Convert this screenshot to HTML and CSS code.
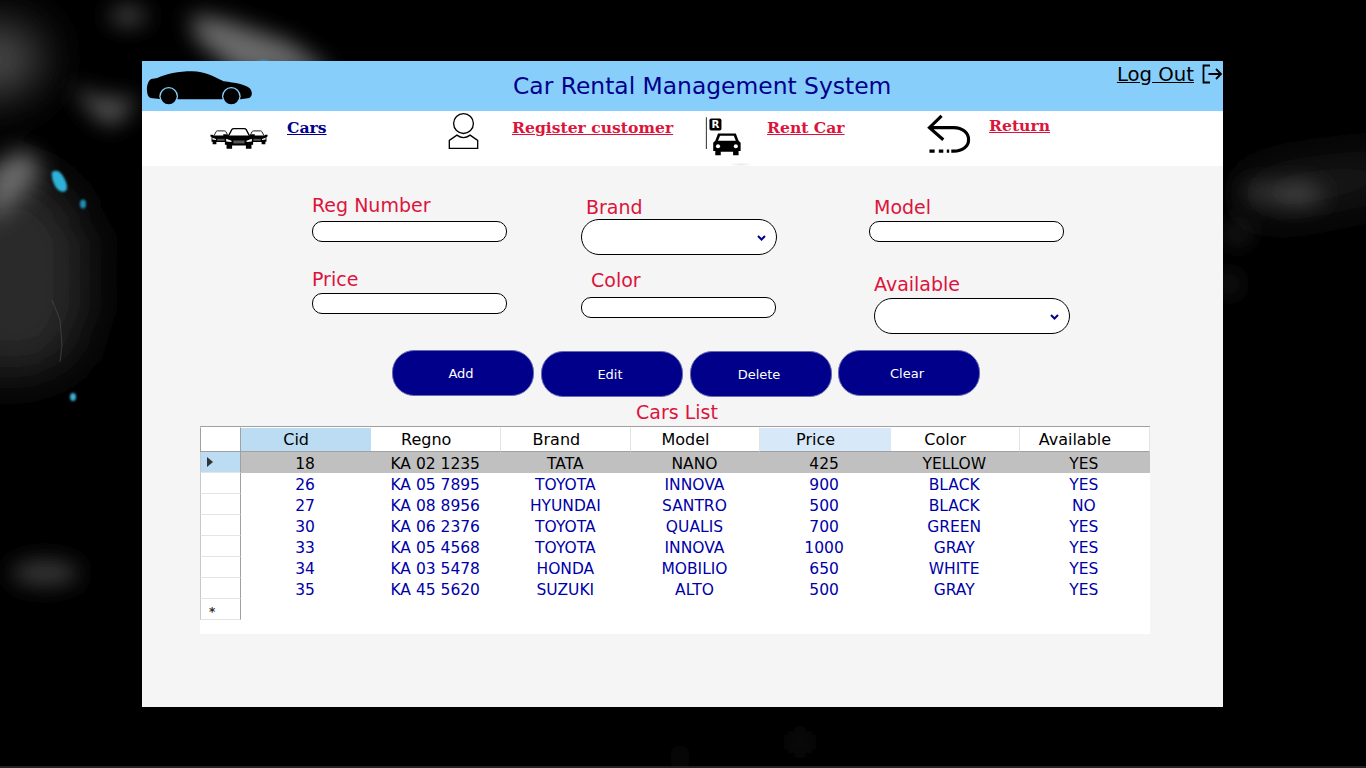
FILE: index.html
```html
<!DOCTYPE html>
<html lang="en">
<head>
  <meta charset="UTF-8" />
  <meta name="viewport" content="width=device-width, initial-scale=1.0" />
  <title>Car Rental Management System</title>
  <link rel="stylesheet" href="styles.css">
</head>
<body>
  <!-- dark wallpaper, painted by hand -->
  <svg class="wallpaper" viewBox="0 0 1366 768" width="1366" height="768">
    <defs>
      <filter id="blurBig" x="-100%" y="-100%" width="300%" height="300%"><feGaussianBlur stdDeviation="24"/></filter>
      <filter id="blurMid" x="-100%" y="-100%" width="300%" height="300%"><feGaussianBlur stdDeviation="11"/></filter>
      <filter id="blurSmall" x="-50%" y="-50%" width="200%" height="200%"><feGaussianBlur stdDeviation="1.2"/></filter>
      <symbol id="frontCar" viewBox="0 0 100 64">
        <path d="M18 24 L28 5 Q30 2 34 2 H66 Q70 2 72 5 L82 24" fill="#fff" stroke="#000" stroke-width="4"/>
        <path d="M2 19 H12 L16 23 H84 L88 19 H98 V27 L93 30 V51 H88 V63 H71 V53 H29 V63 H12 V51 H7 V30 L2 27 Z" fill="#000"/>
        <path d="M11 33 L27 39 V43 L11 41 Z M89 33 L73 39 V43 L89 41 Z" fill="#fff"/>
        <path d="M33 38 H67 V47 H33 Z" fill="#555"/>
      </symbol>
    </defs>
    <g filter="url(#blurBig)">
      <path d="M-40 20 L30 30 L45 60 L25 90 L-40 100 Z" fill="#505050"/>
      <path d="M-40 190 L20 170 L60 190 L85 235 L85 310 L70 360 L20 375 L-40 370 Z" fill="#2a2a2a"/>
      <path d="M1240 185 L1300 172 L1400 160 L1400 185 L1300 205 L1250 210 Z" fill="#2c2c2c"/>
    </g>
    <g filter="url(#blurMid)">
      <path d="M190 14 L225 20 L290 42 L335 75 L240 75 L197 40 Z" fill="#6a6a6a"/>
      <ellipse cx="128" cy="16" rx="18" ry="9" fill="#505050"/>
      <path d="M72 86 L105 100 L135 98 L128 112 L110 126 L92 112 Z" fill="#5e5e5e"/>
      <path d="M-10 170 L22 150 L42 165 L30 188 L-10 225 Z" fill="#6a6a6a"/>
      <ellipse cx="45" cy="573" rx="34" ry="12" fill="#3c3c3c"/>
      <ellipse cx="1296" cy="194" rx="28" ry="10" fill="#4a4a4a"/>
      <ellipse cx="1260" cy="192" rx="16" ry="8" fill="#404040"/>
      <ellipse cx="1238" cy="233" rx="9" ry="6" fill="#4c4c4c"/>
      <ellipse cx="1230" cy="284" rx="7" ry="8" fill="#383838"/>
      <ellipse cx="800" cy="742" rx="5" ry="12" fill="#262626"/>
      <ellipse cx="680" cy="758" rx="5" ry="7" fill="#2a2a2a"/>
    </g>
    <g filter="url(#blurSmall)">
      <path d="M52 172 Q58 168 63 176 Q69 186 66 191 Q60 194 55 186 Q51 178 52 172 Z" fill="#2fb0d8"/>
      <ellipse cx="83" cy="204" rx="3" ry="4.500" fill="#1f8fb4"/>
      <ellipse cx="73" cy="397" rx="3" ry="4" fill="#3ab0d4"/>
      <path d="M255 62 Q262 58 272 62 Z" fill="#3b8fc4"/>
    </g>
    <path d="M52 300 L60 320 L62 345 L60 362" fill="none" stroke="#4a4a4a" stroke-width="0.7"/>
  </svg>

  <div id="mainWindow">
    <header class="topBar">
      <svg class="logoCar" viewBox="12 30 324 108" width="108" height="36">
        <path d="M15 92 C14 78 18 62 28 57 L46 54 C72 42 110 34 150 34 C190 34 215 50 245 64 C280 68 310 74 322 84 C331 92 333 108 322 114 L296 118 H60 L25 114 C18 110 15 100 15 92 Z" fill="#000"/>
        <circle cx="80" cy="109" r="28" fill="#87cefa"/>
        <circle cx="268" cy="109" r="28" fill="#87cefa"/>
        <circle cx="80" cy="109" r="24" fill="#000"/>
        <circle cx="268" cy="109" r="24" fill="#000"/>
      </svg>
      <h1 class="title">Car Rental Management System</h1>
      <div class="logout">
        <a href="#">Log Out</a>
        <svg viewBox="0 0 22 22" width="22" height="22">
          <path d="M9 2.500 H2.500 V19.500 H9 M7.500 11 H20 M15 6 L20 11 L15 16" fill="none" stroke="#000" stroke-width="1.8"/>
        </svg>
      </div>
    </header>

    <nav class="navBar">
      <div class="navItem navCars">
        <svg class="iconCars" viewBox="0 0 58 21" width="58" height="21">
          <use href="#frontCar" x="0" y="2" width="22" height="15"/>
          <use href="#frontCar" x="36" y="2" width="22" height="15"/>
          <use href="#frontCar" x="12" y="0" width="34" height="21"/>
        </svg>
        <a class="blue" href="#">Cars</a>
      </div>
      <div class="navItem navCustomer">
        <svg viewBox="915 155 100 115" width="33" height="38">
          <circle cx="965" cy="190" r="30" fill="#fff" stroke="#000" stroke-width="4"/>
          <path d="M922 265 V241 L945 225 Q965 240 985 225 L1008 241 V265 Z" fill="#fff" stroke="#000" stroke-width="4"/>
        </svg>
        <a href="#">Register customer</a>
      </div>
      <div class="navItem navRent">
        <svg viewBox="44 162 108 116" width="37" height="40">
          <path d="M48 165 V258" stroke="#333" stroke-width="3"/>
          <rect x="57" y="169" width="35" height="35" rx="5" fill="#000"/>
          <text x="74.500" y="197" class="parkR">R</text>
          <path d="M68 240 L74 234 L82 213 H134 L142 234 L148 240 V264 H142 V276 H126 V266 H90 V276 H74 V264 H68 Z" fill="#000"/>
          <path d="M88 219 H128 L134 234 H82 Z" fill="#fff"/>
          <circle cx="82" cy="250" r="6" fill="#fff"/>
          <circle cx="134" cy="250" r="6" fill="#fff"/>
        </svg>
        <a href="#">Rent Car</a>
      </div>
      <div class="navItem navReturn">
        <svg viewBox="685 155 130 118" width="45" height="41">
          <path d="M730 163 L695 197 L735 232 M695 197 H765 C790 197 808 212 808 232 C808 252 790 265 765 265 H758" fill="none" stroke="#000" stroke-width="9"/>
          <path d="M695 265 H710 M722 265 H735 M745 265 H752" fill="none" stroke="#000" stroke-width="9"/>
        </svg>
        <a href="#">Return</a>
      </div>
    </nav>

    <main class="content">
      <form class="carForm">
        <div class="formCol colOne">
          <div class="field fieldReg">
            <label>Reg Number</label>
            <input type="text" />
          </div>
          <div class="field fieldPrice">
            <label>Price</label>
            <input type="text" />
          </div>
        </div>
        <div class="formCol colTwo">
          <div class="field fieldBrand">
            <label>Brand</label>
            <div class="selectBox">
              <select><option></option></select>
              <svg class="chevron" viewBox="0 0 9 6" width="9" height="6"><path d="M1 1 L4.500 4.500 L8 1" fill="none" stroke="#00008b" stroke-width="2"/></svg>
            </div>
          </div>
          <div class="field fieldColor">
            <label>Color</label>
            <input type="text" />
          </div>
        </div>
        <div class="formCol colThree">
          <div class="field fieldModel">
            <label>Model</label>
            <input type="text" />
          </div>
          <div class="field fieldAvailable">
            <label>Available</label>
            <div class="selectBox">
              <select><option></option></select>
              <svg class="chevron" viewBox="0 0 9 6" width="9" height="6"><path d="M1 1 L4.500 4.500 L8 1" fill="none" stroke="#00008b" stroke-width="2"/></svg>
            </div>
          </div>
        </div>
      </form>

      <div class="actions">
        <button type="button">Add</button>
        <button type="button" class="low">Edit</button>
        <button type="button" class="low">Delete</button>
        <button type="button">Clear</button>
      </div>

      <h2 class="listTitle">Cars List</h2>

      <div class="gridWrap">
        <table class="carGrid">
          <colgroup>
            <col class="cHead"><col class="cWide"><col class="cWide"><col class="cWide">
            <col class="cModel"><col class="cPrice"><col class="cColor"><col class="cWide">
          </colgroup>
          <thead>
            <tr>
              <th class="corner"></th>
              <th class="sel">Cid</th>
              <th>Regno</th>
              <th>Brand</th>
              <th>Model</th>
              <th class="soft">Price</th>
              <th>Color</th>
              <th>Available</th>
            </tr>
          </thead>
          <tbody>
            <tr class="current">
              <td class="rowHead"><span class="caret"></span></td>
              <td>18</td><td>KA 02 1235</td><td>TATA</td><td>NANO</td><td>425</td><td>YELLOW</td><td>YES</td>
            </tr>
            <tr>
              <td class="rowHead"></td>
              <td>26</td><td>KA 05 7895</td><td>TOYOTA</td><td>INNOVA</td><td>900</td><td>BLACK</td><td>YES</td>
            </tr>
            <tr>
              <td class="rowHead"></td>
              <td>27</td><td>KA 08 8956</td><td>HYUNDAI</td><td>SANTRO</td><td>500</td><td>BLACK</td><td>NO</td>
            </tr>
            <tr>
              <td class="rowHead"></td>
              <td>30</td><td>KA 06 2376</td><td>TOYOTA</td><td>QUALIS</td><td>700</td><td>GREEN</td><td>YES</td>
            </tr>
            <tr>
              <td class="rowHead"></td>
              <td>33</td><td>KA 05 4568</td><td>TOYOTA</td><td>INNOVA</td><td>1000</td><td>GRAY</td><td>YES</td>
            </tr>
            <tr>
              <td class="rowHead"></td>
              <td>34</td><td>KA 03 5478</td><td>HONDA</td><td>MOBILIO</td><td>650</td><td>WHITE</td><td>YES</td>
            </tr>
            <tr>
              <td class="rowHead"></td>
              <td>35</td><td>KA 45 5620</td><td>SUZUKI</td><td>ALTO</td><td>500</td><td>GRAY</td><td>YES</td>
            </tr>
            <tr>
              <td class="rowHead newRow">*</td>
              <td></td><td></td><td></td><td></td><td></td><td></td><td></td>
            </tr>
          </tbody>
        </table>
      </div>
    </main>
  </div>
</body>
</html>
```

FILE: styles.css
```css
html, body {
  height: 100%;
}
body {
  margin: 0;
  overflow: hidden;
  position: relative;
  font-family: "DejaVu Sans", Verdana, sans-serif;
  background-color: #000;
}
/* thin lighter strip along the bottom of the screen */
body::after {
  content: "";
  position: absolute;
  left: 0;
  right: 0;
  bottom: 0;
  height: 2px;
  background: #222;
}
.wallpaper {
  position: absolute;
  top: 0;
  left: 0;
}

#mainWindow {
  position: relative;
  width: 1081px;
  height: 646px;
  margin: 61px 0 0 142px;
  display: flex;
  flex-direction: column;
  background: #f5f5f5;
}

/* top bar */
.topBar {
  height: 50px;
  flex: none;
  background: #87cefa;
  display: grid;
  grid-template-columns: 371px auto 1fr;
  align-items: start;
}
.logoCar {
  margin: 9px 0 0 4px;
}
.title {
  margin: 10px 0 0;
  font-size: 23.4px;
  line-height: 30px;
  font-weight: normal;
  color: #00008b;
  white-space: nowrap;
}
.logout {
  justify-self: end;
  display: flex;
  align-items: flex-start;
  gap: 7px;
  padding-top: 3px;
}
.logout a {
  color: #000;
  font-size: 19.7px;
  line-height: 22px;
}
.logout svg {
  margin-top: -1px;
}

/* nav */
.navBar {
  height: 55px;
  flex: none;
  background: #fff;
  padding-left: 68px;
  display: grid;
  grid-template-columns: 239px 257px 222px 1fr;
}
.navItem {
  display: flex;
  align-items: flex-start;
}
.navItem a {
  font-family: "DejaVu Serif", serif;
  font-weight: bold;
  font-size: 15.6px;
  line-height: 20px;
  color: #dc143c;
}
.navItem a.blue {
  color: #00008b;
}
.navCars svg {
  margin: 17px 19px 0 0;
}
.navCars a {
  margin-top: 7px;
}
.navCustomer svg {
  margin: 1px 32px 0 -2px;
}
.navCustomer a {
  margin-top: 7px;
}
.navRent {
  position: relative;
}
/* faint smudge under the parking icon */
.navRent::after {
  content: "";
  position: absolute;
  left: 24px;
  top: 52px;
  width: 22px;
  height: 3px;
  background: radial-gradient(ellipse at center, #e8e8e8, #fff 80%);
}
.navRent svg {
  margin: 5px 25px 0 -1px;
}
.navRent a {
  margin-top: 7px;
}
.navReturn svg {
  margin: 2px 18px 0 -2px;
}
.navReturn a {
  margin-top: 5px;
}

/* form */
.content {
  flex: 1;
}
.carForm {
  display: grid;
  grid-template-columns: 269px 288px auto;
  padding-left: 170px;
}
.formCol {
  display: flex;
  flex-direction: column;
}
.field label {
  display: block;
  height: 24px;
  line-height: 24px;
  font-size: 19px;
  color: #dc143c;
}
.field input {
  display: block;
  box-sizing: border-box;
  width: 195px;
  height: 21px;
  margin: 4px 0 0;
  padding: 0 8px;
  background: #fff;
  border: 1px solid #000;
  border-radius: 10px;
  outline: none;
}
.selectBox {
  position: relative;
  width: 196px;
}
.field select {
  display: block;
  box-sizing: border-box;
  width: 196px;
  height: 36px;
  margin: 0;
  padding: 0 8px;
  appearance: none;
  background-color: #fff;
  color: #00008b;
  border: 1px solid #000;
  border-radius: 18px;
  font-size: 14px;
}
.chevron {
  position: absolute;
  right: 11px;
  top: 16px;
}
.fieldReg {
  margin-top: 27px;
}
.fieldPrice {
  margin-top: 25px;
}
.fieldPrice input {
  margin-top: 2px;
}
.fieldBrand {
  margin-top: 29px;
}
.fieldBrand label {
  padding-left: 5px;
}
.fieldColor {
  margin-top: 13px;
}
.fieldColor label {
  padding-left: 10px;
}
.fieldColor input {
  margin-top: 5px;
}
.fieldModel {
  margin-top: 29px;
}
.fieldModel label {
  padding-left: 5px;
}
.fieldModel input {
  margin-top: 2px;
}
.fieldAvailable {
  margin-top: 30px;
  margin-left: 5px;
}
.fieldAvailable .selectBox {
  margin-top: 2px;
}

/* buttons */
.actions {
  display: flex;
  align-items: flex-start;
  gap: 7px;
  margin-top: 16px;
  padding-left: 250px;
}
.actions button {
  width: 142px;
  height: 46px;
  padding: 0 4px 0 0;
  background: #00008b;
  color: #fff;
  border: 1px solid #6a6ab4;
  border-radius: 22px;
  font-family: "DejaVu Sans", sans-serif;
  font-size: 13px;
}
.actions button.low {
  margin-top: 1px;
}
.actions button:last-child {
  margin-left: -1px;
}

.listTitle {
  margin: 2px 0 0;
  height: 26px;
  padding-left: 494px;
  font-size: 19px;
  line-height: 26px;
  font-weight: normal;
  color: #dc143c;
}

/* data grid */
.gridWrap {
  width: 950px;
  height: 207px;
  margin: 1px 0 0 58px;
  background: #fff;
  border-top: 1px solid #a0a0a0;
}
.carGrid {
  table-layout: fixed;
  width: 950px;
  border-collapse: separate;
  border-spacing: 0;
  font-size: 15.5px;
  color: #0000a8;
}
.cHead { width: 41px; }
.cWide { width: 130px; }
.cModel { width: 128px; }
.cPrice { width: 131px; }
.cColor { width: 129px; }

.carGrid th {
  box-sizing: border-box;
  height: 25px;
  padding: 0 19px 0 0;
  font-size: 16px;
  font-weight: normal;
  color: #000;
  border-top: 1px solid #fff;
  border-right: 1px solid #e3e3e3;
  border-bottom: 1px solid #a0a0a0;
}
.carGrid th.corner {
  border-left: 1px solid #a0a0a0;
  border-right: 1px solid #a0a0a0;
  padding: 0;
}
.carGrid th.sel {
  padding-right: 20px;
  background: #bbdcf3;
  border-right: none;
}
.carGrid th.soft {
  background: #d7e9f8;
  border-right: none;
}
.carGrid td {
  box-sizing: border-box;
  height: 21px;
  padding: 4px 2px 0 0;
  text-align: center;
  line-height: 17px;
}
.carGrid tr.current td {
  background: #c0c0c0;
  color: #000;
}
.carGrid td.rowHead,
.carGrid tr.current td.rowHead {
  padding: 0;
  background: #fff;
  border-left: 1px solid #c8c8c8;
  border-right: 1px solid #a0a0a0;
  border-bottom: 1px solid #e4e4e4;
  text-align: left;
}
.carGrid tr.current td.rowHead {
  background: #bbdcf3;
}
.caret {
  display: block;
  width: 0;
  height: 0;
  margin-left: 6px;
  border-left: 6px solid #333;
  border-top: 5px solid transparent;
  border-bottom: 5px solid transparent;
}
.carGrid td.newRow {
  padding: 6px 0 0 8px;
  font-size: 12px;
  font-weight: bold;
  color: #333;
  line-height: 14px;
}
.parkR {
  fill: #fff;
  font-family: "DejaVu Sans", sans-serif;
  font-weight: bold;
  font-size: 30px;
  text-anchor: middle;
}
```
